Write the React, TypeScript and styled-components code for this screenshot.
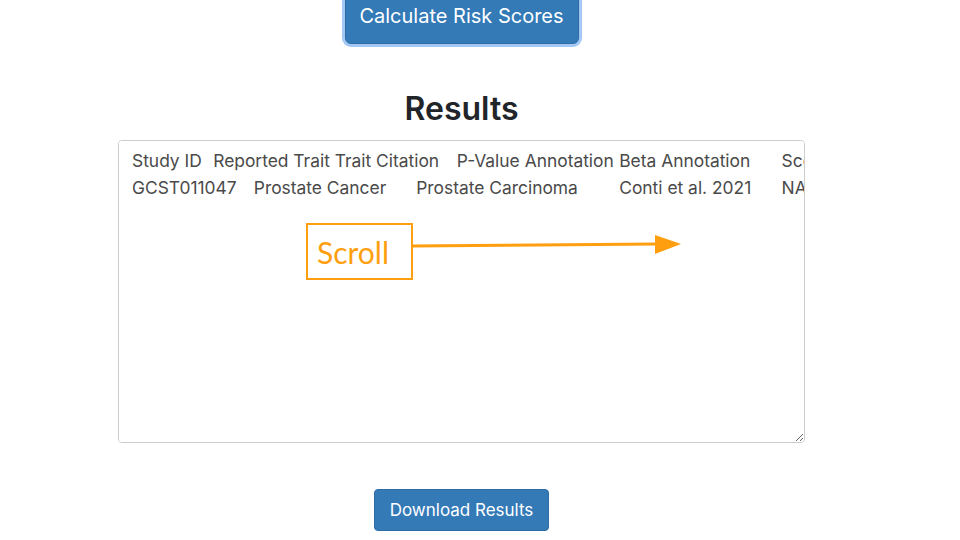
import styled, { createGlobalStyle } from "styled-components";

const GlobalStyle = createGlobalStyle`
  html, body {
    margin: 0;
    padding: 0;
    background: #fff;
  }

  body {
    font-family: Inter, "Liberation Sans", Arial, sans-serif;
    color: #212529;
    overflow: hidden;
  }
`;

const Page = styled.div`
  width: 923px;
  display: flex;
  flex-direction: column;
  align-items: center;
`;

const Button = styled.button<{ $large?: boolean; $focused?: boolean }>`
  font-family: inherit;
  font-size: ${(p) => (p.$large ? "20px" : "17px")};
  line-height: 1.3;
  color: #fff;
  background: #337ab7;
  border: 1px solid #2e6da4;
  border-radius: ${(p) => (p.$large ? "6px" : "4px")};
  padding: ${(p) => (p.$large ? "12px 11px" : "9px 14px")};
  box-shadow: ${(p) => (p.$focused ? "0 0 0 3px #a3c8f5" : "none")};
  cursor: pointer;
`;

const CalcButton = styled(Button)`
  margin-top: -12px;
  width: 234px;
  height: 56px;
`;

const Heading = styled.h2`
  font-size: 32px;
  font-weight: 600;
  line-height: 1.2;
  margin: 46px 0 12px;
`;

const ResultsBox = styled.div`
  position: relative;
  width: 687px;
  height: 303px;
`;

const Output = styled.textarea`
  box-sizing: border-box;
  width: 100%;
  height: 100%;
  padding: 6px 13px;
  font-family: Inter, "Liberation Sans", Arial, sans-serif;
  font-size: 17.4px;
  line-height: 27px;
  color: #4a4a4a;
  background: #fff;
  border: 1px solid #ccc;
  border-radius: 4px;
  white-space: pre;
  overflow: auto;
  scrollbar-width: none;
  resize: both;
  tab-size: 40.6px;
  outline: none;
`;

const Hint = styled.div`
  position: absolute;
  left: 188px;
  top: 83px;
  display: flex;
  align-items: flex-start;
  pointer-events: none;
`;

const HintLabel = styled.div`
  box-sizing: border-box;
  width: 107px;
  height: 57px;
  border: 2px solid #ff9f0f;
  display: flex;
  align-items: center;
  padding-left: 9px;
  font-family: Lato, "Open Sans", sans-serif;
  font-size: 30px;
  color: #ff9f0f;
  background: #fff;
`;

const Arrow = styled.svg`
  margin-top: 11px;
`;

const DownloadButton = styled(Button)`
  margin-top: 46px;
  width: 175px;
  height: 42px;
  padding: 0;
`;

const rows = [
  "Study ID\tReported Trait Trait Citation\tP-Value Annotation\tBeta Annotation\tScore Type\tUnits (if applicable)\tSNP Overlap\tSNPs Excluded Due To Cutoffs\tIncluded SNPs\tUsed Super Population\tPolygenic Risk Score\tPercentile",
  "GCST011047\tProstate Cancer\tProstate Carcinoma\tConti et al. 2021\tNA\tNA\tOR\tNA\t269|269\t0\t269\tEUR\t1.2873\t58",
];

export default function App() {
  return (
    <>
      <GlobalStyle />
      <Page>
        <CalcButton $large $focused>
          Calculate Risk Scores
        </CalcButton>
        <Heading>Results</Heading>
        <ResultsBox>
          <Output readOnly wrap="off" defaultValue={rows.join("\n")} />
          <Hint>
            <HintLabel>Scroll</HintLabel>
            <Arrow width="270" height="24" viewBox="0 0 270 24">
              <line x1="0" y1="12" x2="245" y2="10" stroke="#ff9f0f" strokeWidth="3" />
              <polygon points="242,1 268,10 242,20" fill="#ff9f0f" />
            </Arrow>
          </Hint>
        </ResultsBox>
        <DownloadButton>Download Results</DownloadButton>
      </Page>
    </>
  );
}
